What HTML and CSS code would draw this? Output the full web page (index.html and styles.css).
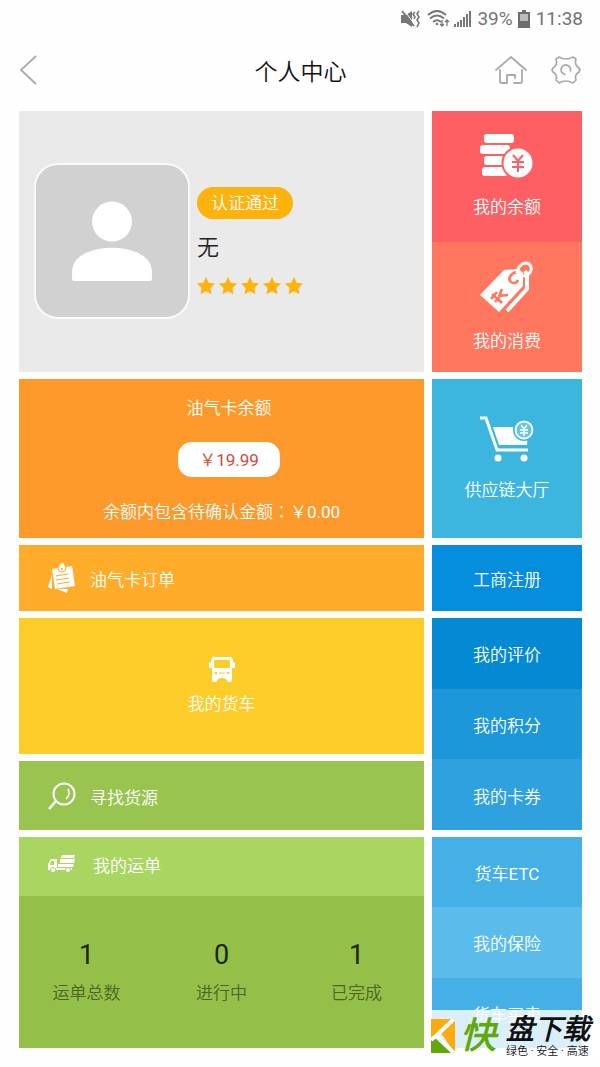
FILE: index.html
```html
<!DOCTYPE html>
<html lang="zh-CN">
<head>
<meta charset="utf-8">
<meta name="viewport" content="width=device-width, initial-scale=1">
<title>个人中心</title>
<link rel="stylesheet" href="styles.css">
</head>
<body>
<div class="page">
  <div class="status">
    <svg width="20" height="18" viewBox="0 0 20 18" fill="none" stroke="#777" stroke-width="2"><path d="M0 5h5l6-4v16l-6-4H0z" fill="#777" stroke="none"/><path d="M3 0l11 15" stroke="#fff" stroke-width="1"/><path d="M1 1l12 15"/><path d="M14 2l-2 2 2 3-1 2M18 1l-2 3 2 3-2 3 2 3-2 4" stroke-width="1.6"/></svg>
    <svg class="wifi" width="24" height="18" viewBox="0 0 24 18" fill="none" stroke="#777" stroke-width="1.800"><path d="M1 5q9-8 18 0M3 8.500q7-6 14 0M6 12q4-3.500 8 0"/><circle cx="10" cy="14" r="1.300" fill="#777" stroke="none"/><path d="M15 10v6m-2-2l2 2 2-2M20 16v-6m-2 2l2-2 2 2" stroke-width="1.300"/></svg>
    <svg class="signal" width="18" height="16" viewBox="0 0 18 16" fill="#777"><path d="M0 13h2v3H0zM3 11h2v5H3zM6 9h2v7H6zM9 6h2v10H9zM12 3h2v13h-2zM15 0h2v16h-2z"/></svg>
    <span>39%</span>
    <svg class="battery" width="12" height="18" viewBox="0 0 12 18"><path d="M4 0h4v2h4v16H0V2h4z" fill="#6d6d6d"/><path d="M2 4h8v7H2z" fill="#bbb"/></svg>
    <span>11:38</span>
  </div>
  <header class="bar">
    <button class="icon-btn" type="button" aria-label="返回"><svg width="18" height="30" viewBox="0 0 18 30" fill="none" stroke="#aaa" stroke-width="1.800"><path d="M17 1L2 15l15 14"/></svg></button>
    <h1>个人中心</h1>
    <div class="bar-actions">
      <button class="icon-btn" type="button" aria-label="首页"><svg width="32" height="30" viewBox="0 0 32 30" fill="none" stroke="#aaa" stroke-width="1.800" stroke-linecap="round" stroke-linejoin="round"><path d="M1 15L16 2l15 13M5 15v11q0 2 2 2h5v-8h8v3M19 28h6q2 0 2-2V15"/></svg></button>
      <button class="icon-btn" type="button" aria-label="设置"><svg width="30" height="30" viewBox="0 0 30 30" fill="none" stroke="#aaa" stroke-width="1.700" stroke-linecap="round" stroke-linejoin="round"><path d="M8 2q7 4 14 0l3 2q-2 6 3 9l1 2-1 2q-5 3-3 8l-3 3q-7-4-14 0l-3-3q2-5-3-8l-1-2 1-2q5-3 3-9z"/><path d="M14 19.500a4.800 4.800 0 1 1 5.500-3.500"/></svg></button>
    </div>
  </header>

  <main class="grid">
    <section class="tile profile">
      <svg class="avatar" viewBox="0 0 156 156" fill="#fff" role="img" aria-label="头像"><circle cx="78" cy="58" r="20.500"/><path d="M37 110c0-17 20-25 41-25s41 8 41 25v7q0 2-2 2H39q-2 0-2-2z"/></svg>
      <div class="who">
        <span class="badge">认证通过</span>
        <span class="name">无</span>
        <svg class="stars" width="106" height="18" viewBox="0 0 106 18" fill="#fdb30c" role="img" aria-label="五星"><defs><path id="star" d="M9 0l2.700 5.700 6.300.7-4.600 4.500 1.200 6.300L9 14.200l-5.600 3 1.200-6.300L0 6.400l6.300-.7z"/></defs><use href="#star"/><use href="#star" x="22"/><use href="#star" x="44"/><use href="#star" x="66"/><use href="#star" x="88"/></svg>
      </div>
    </section>

    <div class="stack">
      <a class="tile col coral" href="#balance">
        <svg width="54" height="46" viewBox="0 0 54 46"><g fill="#fff"><rect x="4" y="1" width="30" height="9" rx="3"/><rect x="0" y="12" width="30" height="9" rx="3"/><rect x="4" y="23" width="26" height="9" rx="3"/><rect x="2" y="34" width="26" height="9" rx="3"/></g><circle cx="38" cy="30" r="15.500" fill="#fff" stroke="#fe5f62" stroke-width="2"/><path d="M33 22l5 6 5-6M38 28v11M32 29h12M32 34h12" fill="none" stroke="#fe5f62" stroke-width="2"/></svg>
        <span>我的余额</span>
      </a>
      <a class="tile col salmon" href="#spending">
        <svg width="54" height="52" viewBox="0 0 54 52"><path d="M24 9l15-1 4 4v13L19 51 0 34z" fill="#fff"/><path d="M45 10l2 4v14L27 50" fill="none" stroke="#fff" stroke-width="4"/><path d="M37 11c-6 1-10 7-6 10 3 2 6 1 7-2" fill="none" stroke="#fe775e" stroke-width="2.500"/><path d="M37 12C38 4 45 0 49 3c5 4 1 12-6 12" fill="none" stroke="#fff" stroke-width="3"/><path d="M12 33l10 9M11 38l6-7M15 41l7-8M19 35l3-7M19 35l9-1" fill="none" stroke="#fe775e" stroke-width="2.500"/></svg>
        <span>我的消费</span>
      </a>
    </div>

    <section class="tile col card">
      <div class="card-top">
        <h2>油气卡余额</h2>
        <strong class="amount">￥19.99</strong>
      </div>
      <p>余额内包含待确认金额<span class="colon" lang="zh-TW">：</span>￥<span class="latin">0.00</span></p>
    </section>
    <a class="tile col cyan" href="#hall">
      <svg width="54" height="46" viewBox="0 0 54 46"><path d="M0 2h6l11 32h31" fill="none" stroke="#fff" stroke-width="3"/><path d="M13 11h35l-1 18H19z" fill="#fff"/><circle cx="18" cy="42" r="3.500" fill="#fff"/><circle cx="44" cy="42" r="3.500" fill="#fff"/><circle cx="44" cy="14" r="11" fill="#3cb6df"/><circle cx="44" cy="14" r="8.500" fill="#63c5e6" stroke="#fff" stroke-width="1.800"/><path d="M41 9l3 4 3-4M44 13v7M40 14h8M40 17h8" fill="none" stroke="#fff" stroke-width="1.500"/></svg>
      <span>供应链大厅</span>
    </a>

    <a class="tile row amber" href="#orders">
      <svg width="28" height="30" viewBox="0 0 28 30"><path d="M4 12L0 24l4 2zM9 26l10 4 1-4z" fill="#fff"/><path d="M4 6l20-3 3 20-20 3z" fill="#fff"/><path d="M8 13l12-2M8 17l13-2M9 21l13-2" stroke="#ffac2a" stroke-width="1.200"/><circle cx="14" cy="5" r="4" fill="#fff" stroke="#ffac2a"/><circle cx="14" cy="2" r="2" fill="#fff"/><circle cx="14" cy="6" r="1" fill="#ffac2a"/></svg>
      <span>油气卡订单</span>
    </a>
    <a class="tile row center azure" href="#register"><span>工商注册</span></a>

    <a class="tile col yellow" href="#trucks">
      <svg width="28" height="26" viewBox="0 0 28 26"><path d="M6 0h16q3 0 3 5l2 1v5h-3v12q0 2-2 2h-2l-2-3q-4-2-8 0l-2 3H6q-2 0-2-2V11H1V6l2-1q0-5 3-5z" fill="#fff"/><rect x="6" y="3" width="16" height="8" rx="1" fill="#fccd29"/><circle cx="8" cy="16" r="1.300" fill="#fccd29"/><circle cx="20" cy="16" r="1.300" fill="#fccd29"/><path d="M11 16h6" stroke="#fccd29"/></svg>
      <span>我的货车</span>
    </a>
    <div class="stack tall">
      <a class="tile row center blue-a" href="#reviews"><span>我的评价</span></a>
      <a class="tile row center blue-b" href="#points"><span>我的积分</span></a>
      <a class="tile row center blue-c" href="#coupons"><span>我的卡券</span></a>
    </div>

    <a class="tile row green" href="#find">
      <svg width="28" height="28" viewBox="0 0 28 28" fill="none" stroke="#fff" stroke-width="2"><circle cx="16" cy="12" r="10.500"/><path d="M8 19l-7 8" stroke-width="2.500"/><path d="M20 7q3 5-2 10" stroke-width="1.500"/></svg>
      <span>寻找货源</span>
    </a>

    <section class="waybills">
      <a class="tile row lime" href="#waybills">
        <svg width="28" height="20" viewBox="0 0 28 20"><path d="M14 1h13l-1 3H13zM12 5h15l-1 4H12zM10 10h16l-1 3H10zM8 14h16v2H8zM1 8l2-3h6v11H0v-5z" fill="#fff"/><path d="M3 7h3v4H2z" fill="#a9d661"/><g fill="#fff" stroke="#a9d661"><circle cx="5" cy="16" r="2.500"/><circle cx="20" cy="16" r="2.500"/></g></svg>
        <span>我的运单</span>
      </a>
      <dl class="stats">
        <div><dt>运单总数</dt><dd>1</dd></div>
        <div><dt>进行中</dt><dd>0</dd></div>
        <div><dt>已完成</dt><dd>1</dd></div>
      </dl>
    </section>
    <div class="stack">
      <a class="tile row center sky-a" href="#etc"><span>货车<b class="latin">ETC</b></span></a>
      <a class="tile row center sky-b" href="#insurance"><span>我的保险</span></a>
      <a class="tile row center sky-a" href="#trade"><span>货车买卖</span></a>
    </div>
  </main>

  <aside class="mark">
    <svg width="24" height="34" viewBox="0 0 24 34"><path d="M0 0h24v34z" fill="#fbab0b"/><path d="M0 0h24L5 17l19 17H0z" fill="#fbab0b"/><path d="M0 20l5-3 15 17H0z" fill="#64a70b"/><path d="M23 0L5 17l18 17M5 17L0 21" fill="none" stroke="#fff" stroke-width="4"/></svg>
    <span class="mark-lead">快</span>
    <div class="mark-text"><b>盘下载</b><small>绿色 · 安全 · 高速</small></div>
  </aside>
</div>
</body>
</html>
```
FILE: styles.css
```css
* { box-sizing: border-box; margin: 0; }

body {
  background: #fefefe;
  color: #222;
  font: 350 17px/24px Roboto, "Noto Sans CJK SC DemiLight", "Noto Sans CJK SC", sans-serif;
}

svg { display: block; flex: none; }
a { color: inherit; text-decoration: none; }

.page { position: relative; padding: 0 18px 19px 19px; }

.status {
  display: flex;
  align-items: center;
  justify-content: flex-end;
  height: 38px;
  margin-right: -1px;
  color: #747474;
  font-size: 19px;
  font-weight: 400;
}
.wifi { margin-left: 6px; }
.signal { margin: 0 5px 0 3px; }
.battery { margin: 0 6px 0 5px; }

.bar {
  display: grid;
  grid-template-columns: 1fr auto 1fr;
  align-items: center;
  height: 73px;
  padding-bottom: 10px;
}
.bar h1 { padding-top: 6px; font-size: 23px; font-weight: 350; line-height: 32px; color: #111; }
.bar-actions { display: flex; justify-content: flex-end; gap: 24px; padding-right: 1px; }
.icon-btn { padding: 0; border: 0; background: none; justify-self: start; cursor: pointer; }

.grid {
  display: grid;
  grid-template-columns: 27fr 10fr;
  grid-template-rows:
    minmax(261px, auto) minmax(159px, auto) minmax(66px, auto)
    minmax(136px, auto) minmax(69px, auto) minmax(211px, auto);
  gap: 7px 8px;
}

.tile { display: flex; align-items: center; color: #fff; }
.col { flex-direction: column; justify-content: center; }
.row { padding: 0 29px; gap: 14px; }
.row span { padding-top: 4px; }
.center { justify-content: center; }
.stack { display: grid; grid-auto-rows: 1fr; }
.tall { grid-row: 4 / span 2; grid-column: 2; }
.latin { font-weight: 400; }

.profile { gap: 7px; padding: 0 15px 2px; background: #eaeaea; color: #222; }
.avatar {
  width: 156px;
  border: 2px solid #fafafa;
  border-radius: 24px;
  background: #d1d1d1;
}
.who { display: flex; flex-direction: column; align-items: flex-start; gap: 12px; }
.badge { padding: 4px 14px; border-radius: 16px; background: #fdb30c; color: #fff; }
.name { font-size: 22px; line-height: 34px; }

.coral { background: #fe5f62; gap: 16px; }
.salmon { background: #fe775e; gap: 16px; }
.card { background: #fd992a; justify-content: space-between; padding: 17px 0 14px; }
.card-top { display: flex; flex-direction: column; align-items: center; gap: 22px; padding-left: 15px; }
.card h2 { font-size: 17px; font-weight: 350; }
.amount {
  padding: 6px 21px 5px;
  border-radius: 14px;
  background: #fff;
  color: #cc4b3c;
  font-weight: 400;
}
.colon { font-family: "Noto Sans CJK TC", sans-serif; }
.cyan { background: #3cb6df; gap: 16px; }
.amber { background: #ffac2a; }
.azure { background: #058edd; }
.yellow { background: #fccd29; gap: 9px; }
.blue-a { background: #048ad2; }
.blue-b { background: #1b97da; }
.blue-c { background: #2fa1de; }
.green { background: #99c44f; }
.sky-a { background: #45b0e6; }
.sky-b { background: #5bbceb; }

.waybills { display: grid; grid-template-rows: 59px 1fr; background: #94bf49; }
.lime { background: #a9d661; gap: 17px; padding-bottom: 5px; }
.stats { display: grid; grid-template-columns: 1fr 1fr 1fr; align-items: center; padding: 0; text-align: center; }
.stats div { display: flex; flex-direction: column-reverse; gap: 10px; }
.stats dt { color: #4b6522; }
.stats dd { color: #1c260c; font-size: 27px; font-weight: 400; line-height: 32px; }

.mark {
  position: absolute;
  right: 0;
  bottom: 5px;
  display: flex;
  align-items: center;
  width: 169px;
  height: 52px;
  background: rgba(255, 255, 255, .8);
}
.mark-lead {
  margin: 0 10px 0 5px;
  color: #64a70b;
  font-size: 36px;
  font-style: italic;
  font-weight: 900;
  line-height: 44px;
}
.mark-text { display: flex; flex-direction: column; padding-top: 2px; color: #111; }
.mark-text b { font-size: 28px; font-style: italic; font-weight: 900; line-height: 30px; }
.mark-text small { font-size: 11px; font-weight: 400; line-height: 14px; white-space: nowrap; }
```
